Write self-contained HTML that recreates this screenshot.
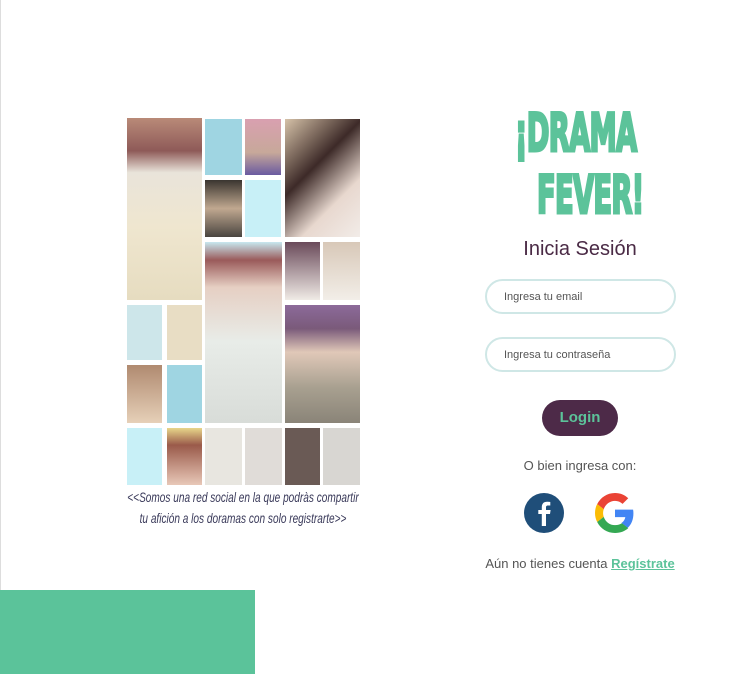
<!DOCTYPE html>
<html><head><meta charset="utf-8"><style>
body{margin:0;width:749px;height:674px;background:#fff;position:relative;overflow:hidden;font-family:"Liberation Sans",sans-serif}
.t{position:absolute}
.lb{position:absolute;left:0;top:0;width:1px;height:590px;background:#ddd}
.logo{position:absolute;color:#5cc39a;-webkit-text-stroke:2.5px #5cc39a;font-family:"DejaVu Sans Condensed","Liberation Sans",sans-serif;font-weight:bold;font-size:44px;letter-spacing:-1px;transform:scale(0.69,1.2);transform-origin:top left;line-height:1;white-space:nowrap}
.inp{position:absolute;left:485px;width:191px;height:35px;border:2px solid #cfe7e6;border-radius:18px;box-sizing:border-box;font-size:11px;color:#555;padding-left:17px;line-height:32px}
.cap{position:absolute;left:243px;white-space:nowrap;font-style:italic;font-size:14px;color:#3a3a5a;transform:translateX(-50%) scaleX(0.72);transform-origin:center}
</style></head><body>
<div class="lb"></div>
<div class="t" style="left:127px;top:118px;width:75px;height:182px;background:linear-gradient(180deg,#b98a78 0,#8e5a58 18%,#e9e4da 30%,#efe6cf 60%,#e6dcc0 100%)"></div>
<div class="t" style="left:205px;top:119px;width:37px;height:56px;background:#9fd5e2"></div>
<div class="t" style="left:245px;top:119px;width:36px;height:56px;background:linear-gradient(#d9a0b0,#c7a89a 60%,#6a5aa0)"></div>
<div class="t" style="left:285px;top:119px;width:75px;height:118px;background:linear-gradient(135deg,#d6c2a8,#3d2a28 40%,#e8d8cf 70%,#f2ece8)"></div>
<div class="t" style="left:205px;top:180px;width:37px;height:57px;background:linear-gradient(#3a3530,#c0a890 50%,#4a4540)"></div>
<div class="t" style="left:245px;top:180px;width:36px;height:57px;background:#c8f0f7"></div>
<div class="t" style="left:205px;top:242px;width:77px;height:181px;background:linear-gradient(180deg,#c7e7ef 0,#9a5a5a 10%,#e6cfc3 25%,#e8ece8 55%,#d8dcd8 100%)"></div>
<div class="t" style="left:285px;top:242px;width:35px;height:58px;background:linear-gradient(#6a4a5a,#f0ebe6)"></div>
<div class="t" style="left:323px;top:242px;width:37px;height:58px;background:linear-gradient(#d8c8b8,#f2eee8)"></div>
<div class="t" style="left:127px;top:305px;width:35px;height:55px;background:#cde6ea"></div>
<div class="t" style="left:167px;top:305px;width:35px;height:55px;background:#e8ddc4"></div>
<div class="t" style="left:285px;top:305px;width:75px;height:118px;background:linear-gradient(180deg,#8c6a9a,#7a5a7a 20%,#e0c8b8 40%,#a8a090 70%,#8a8478)"></div>
<div class="t" style="left:127px;top:365px;width:35px;height:58px;background:linear-gradient(#b08a70,#e6d0b8)"></div>
<div class="t" style="left:167px;top:365px;width:35px;height:58px;background:#9fd5e2"></div>
<div class="t" style="left:127px;top:428px;width:35px;height:57px;background:#c8f0f7"></div>
<div class="t" style="left:167px;top:428px;width:35px;height:57px;background:linear-gradient(#e8d68a,#9a5a4a 30%,#e8c8b8)"></div>
<div class="t" style="left:205px;top:428px;width:37px;height:57px;background:#e8e6e0"></div>
<div class="t" style="left:245px;top:428px;width:37px;height:57px;background:#e0dcd8"></div>
<div class="t" style="left:285px;top:428px;width:35px;height:57px;background:#6a5a55"></div>
<div class="t" style="left:323px;top:428px;width:37px;height:57px;background:#d8d6d2"></div>
<div class="cap" style="top:489px">&lt;&lt;Somos una red social en la que podràs compartir</div>
<div class="cap" style="top:510px">tu afición a los doramas con solo registrarte&gt;&gt;</div>
<div class="logo" style="left:515px;top:108px">¡DRAMA</div>
<div class="logo" style="left:537px;top:170px">FEVER!</div>
<div class="t" style="left:480px;top:238px;width:200px;text-align:center;font-size:20px;color:#4a2a45">Inicia Sesión</div>
<div class="inp" style="top:279px">Ingresa tu email</div>
<div class="inp" style="top:337px">Ingresa tu contraseña</div>
<div class="t" style="left:542px;top:400px;width:76px;height:36px;border-radius:18px;background:#4d2a48;color:#5cc39a;font-weight:bold;font-size:15px;line-height:36px;text-align:center">Login</div>
<div class="t" style="left:480px;top:458px;width:200px;text-align:center;font-size:13px;color:#555">O bien ingresa con:</div>
<svg class="t" style="left:524px;top:493px" width="40" height="40" viewBox="0 0 40 40"><circle cx="20" cy="20" r="20" fill="#1f4e79"/><path d="M22 33V21h4l.6-4H22v-2.5c0-1.2.4-2 2-2h2.3V9c-.4 0-1.7-.2-3.3-.2-3.3 0-5.2 2-5.2 5.4V17h-3.5v4h3.5v12z" fill="#fff"/></svg>
<svg class="t" style="left:595px;top:493px" width="40" height="40" viewBox="0 0 48 48"><path fill="#EA4335" d="M24 9.5c3.5 0 6.6 1.2 9.1 3.6l6.8-6.8C35.8 2.4 30.3 0 24 0 14.6 0 6.6 5.4 2.6 13.3l7.9 6.2C12.4 13.7 17.7 9.5 24 9.5z"/><path fill="#4285F4" d="M46.1 24.5c0-1.6-.1-3.1-.4-4.5H24v9h12.4c-.5 2.9-2.2 5.4-4.7 7l7.6 5.9c4.4-4.1 6.8-10.1 6.8-17.4z"/><path fill="#FBBC05" d="M10.5 28.6c-.5-1.4-.8-3-.8-4.6s.3-3.2.8-4.6l-7.900-6.2C.9 16.5 0 20.1 0 24s.9 7.5 2.6 10.8l7.9-6.2z"/><path fill="#34A853" d="M24 48c6.5 0 11.9-2.1 15.9-5.8l-7.6-5.9c-2.1 1.4-4.9 2.3-8.3 2.3-6.3 0-11.6-4.2-13.5-10l-7.9 6.2C6.6 42.6 14.6 48 24 48z"/></svg>
<div class="t" style="left:470px;top:556px;width:220px;text-align:center;font-size:13px;color:#555">Aún no tienes cuenta <span style="color:#5cc39a;font-weight:bold;text-decoration:underline">Regístrate</span></div>
<div class="t" style="left:0;top:590px;width:255px;height:84px;background:#5bc39a"></div>
</body></html>
